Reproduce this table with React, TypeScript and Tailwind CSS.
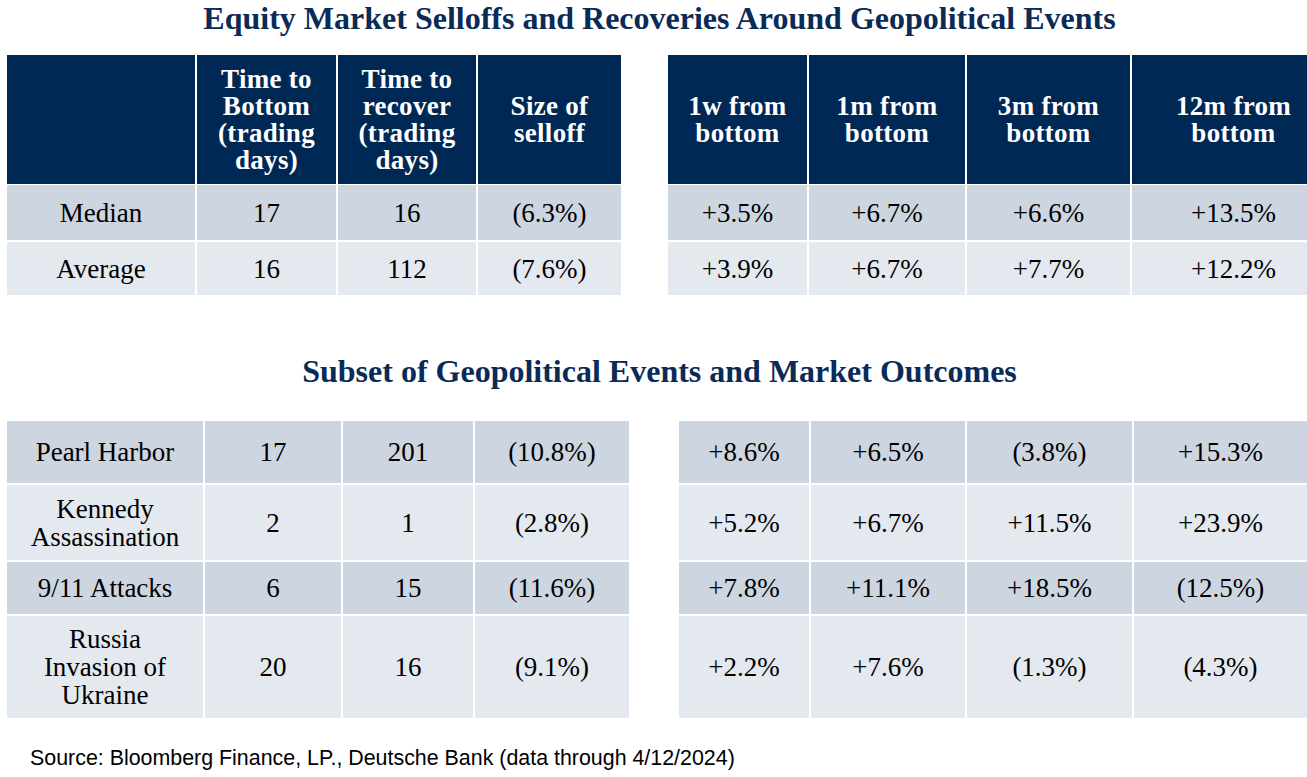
import React from 'react';

const serif = "font-['Liberation_Serif',serif]";

const topLeftCols = 'grid grid-cols-[188px_139px_138px_143px] gap-x-[2px]';
const topRightCols = 'grid grid-cols-[139px_156px_163px_203px] gap-x-[2px]';
const botLeftCols = 'grid grid-cols-[196px_136px_130px_154px] gap-x-[2px]';
const botRightCols = 'grid grid-cols-[130px_154px_165px_173px] gap-x-[2px]';

const dark = 'bg-[#cdd5e1]';
const light = 'bg-[#e4e8ef]';

const topRows = [
  { h: 'h-[55px] mt-[1px]', bg: dark, left: ['Median', '17', '16', '(6.3%)'], right: ['+3.5%', '+6.7%', '+6.6%', '+13.5%'] },
  { h: 'h-[53px] mt-[2px]', bg: light, left: ['Average', '16', '112', '(7.6%)'], right: ['+3.9%', '+6.7%', '+7.7%', '+12.2%'] },
];

const bottomRows = [
  { h: 'h-[62px]', bg: dark, left: ['Pearl Harbor', '17', '201', '(10.8%)'], right: ['+8.6%', '+6.5%', '(3.8%)', '+15.3%'] },
  { h: 'h-[75px] mt-[2px]', bg: light, left: ['Kennedy Assassination', '2', '1', '(2.8%)'], right: ['+5.2%', '+6.7%', '+11.5%', '+23.9%'] },
  { h: 'h-[52px] mt-[2px]', bg: dark, left: ['9/11 Attacks', '6', '15', '(11.6%)'], right: ['+7.8%', '+11.1%', '+18.5%', '(12.5%)'] },
  { h: 'h-[102px] mt-[2px]', bg: light, left: ['Russia Invasion of Ukraine', '20', '16', '(9.1%)'], right: ['+2.2%', '+7.6%', '(1.3%)', '(4.3%)'] },
];

function Cell({ text, bg }: { text: string; bg: string }) {
  return (
    <div className={`${bg} flex items-center justify-center text-center px-6 ${serif} text-[27px] leading-[28px] text-black`}>
      {text}
    </div>
  );
}

function HeadCell({ text }: { text: string }) {
  return (
    <div className={`bg-[#002855] flex items-center justify-center text-center px-4 ${serif} font-bold text-[27px] leading-[27px] tracking-[0.3px] text-white`}>
      {text}
    </div>
  );
}

function Title({ children }: { children: React.ReactNode }) {
  return (
    <div className={`text-center pl-[12px] ${serif} font-bold text-[32px] leading-[36px] text-[#0a2b57]`}>
      {children}
    </div>
  );
}

export default function App() {
  return (
    <div className="w-[1307px] h-[777px] overflow-hidden bg-white">
      <Title>Equity Market Selloffs and Recoveries Around Geopolitical Events</Title>

      <div className="flex mt-[19px] pl-[7px] gap-x-[47px]">
        <div className="w-[614px] flex flex-col">
          <div className={`${topLeftCols} h-[129px]`}>
            <div className="bg-[#002855]" />
            <HeadCell text="Time to Bottom (trading days)" />
            <HeadCell text="Time to recover (trading days)" />
            <HeadCell text="Size of selloff" />
          </div>
          {topRows.map((r, i) => (
            <div key={i} className={`${topLeftCols} ${r.h}`}>
              {r.left.map((t, j) => <Cell key={j} text={t} bg={r.bg} />)}
            </div>
          ))}
        </div>

        <div className="w-[667px] shrink-0 flex flex-col">
          <div className={`${topRightCols} h-[129px]`}>
            <HeadCell text="1w from bottom" />
            <HeadCell text="1m from bottom" />
            <HeadCell text="3m from bottom" />
            <HeadCell text="12m from bottom" />
          </div>
          {topRows.map((r, i) => (
            <div key={i} className={`${topRightCols} ${r.h}`}>
              {r.right.map((t, j) => <Cell key={j} text={t} bg={r.bg} />)}
            </div>
          ))}
        </div>
      </div>

      <div className="mt-[58px]">
        <Title>Subset of Geopolitical Events and Market Outcomes</Title>
      </div>

      <div className="flex mt-[32px] pl-[7px] gap-x-[50px]">
        <div className="w-[622px] flex flex-col">
          {bottomRows.map((r, i) => (
            <div key={i} className={`${botLeftCols} ${r.h}`}>
              {r.left.map((t, j) => <Cell key={j} text={t} bg={r.bg} />)}
            </div>
          ))}
        </div>
        <div className="w-[628px] shrink-0 flex flex-col">
          {bottomRows.map((r, i) => (
            <div key={i} className={`${botRightCols} ${r.h}`}>
              {r.right.map((t, j) => <Cell key={j} text={t} bg={r.bg} />)}
            </div>
          ))}
        </div>
      </div>

      <div className="mt-[28px] pl-[30px] font-['Liberation_Sans',Arial,sans-serif] text-[21.4px] leading-[24px] text-black">
        Source: Bloomberg Finance, LP., Deutsche Bank (data through 4/12/2024)
      </div>
    </div>
  );
}
